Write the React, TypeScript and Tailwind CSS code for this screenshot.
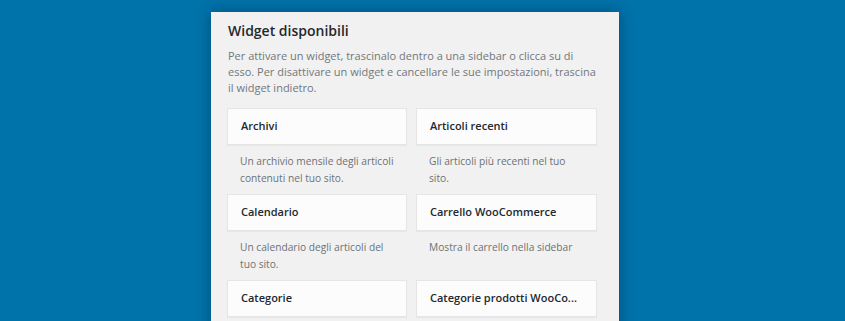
const widgets = [
  { title: 'Archivi', desc: 'Un archivio mensile degli articoli contenuti nel tuo sito.' },
  { title: 'Articoli recenti', desc: 'Gli articoli più recenti nel tuo sito.' },
  { title: 'Calendario', desc: 'Un calendario degli articoli del tuo sito.' },
  { title: 'Carrello WooCommerce', desc: 'Mostra il carrello nella sidebar' },
  { title: 'Categorie', desc: 'Un elenco o un menu a tendina di categorie.' },
  { title: 'Categorie prodotti WooCo...', desc: 'Un elenco o un menu a tendina delle categorie prodotto.' },
];

const App = () => {
  return (
    <div
      className="w-[845px] h-[321px] overflow-hidden bg-[#0073aa] pl-[211px] pt-[12px]"
      style={{ fontFamily: '"Open Sans", "Liberation Sans", sans-serif' }}
    >
      <div className="w-[408px] h-[340px] bg-[#f1f1f1] shadow-[0_0_14px_rgba(0,30,60,0.45)] pl-[16px] pr-[22px] pt-[9px]">
        <h2 className="pl-[1px] text-[14px] leading-[20px] text-[#23282d] font-semibold">
          Widget disponibili
        </h2>
        <p className="mt-[7px] pl-[1px] w-[375px] text-[11px] leading-[16px] text-[#72777c]">
          Per attivare un widget, trascinalo dentro a una sidebar o clicca su di esso. Per disattivare un widget e cancellare le sue impostazioni, trascina il widget indietro.
        </p>

        <div className="mt-[12px] grid grid-cols-[180px_181px] gap-x-[9px]">
          {widgets.map((w, i) => (
            <div key={i} className="h-[86px]">
              <div className="h-[37px] flex items-center bg-[#fcfcfc] border border-[#e5e5e5] px-[13px] shadow-[0_1px_1px_rgba(0,0,0,0.04)]">
                <span className="text-[11px] font-semibold text-[#23282d] whitespace-nowrap">{w.title}</span>
              </div>
              <p className="pt-[8px] pl-[13px] w-[169px] text-[10.2px] leading-[17px] text-[#6c7176]">
                {w.desc}
              </p>
            </div>
          ))}
        </div>
      </div>
    </div>
  );
};

export default App;
